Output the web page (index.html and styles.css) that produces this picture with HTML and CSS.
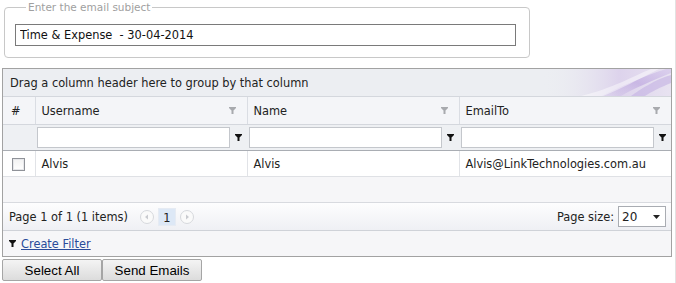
FILE: index.html
```html
<!DOCTYPE html>
<html lang="en">

<head>
    <meta charset="UTF-8">
    <title>Send Emails</title>
    <link rel="stylesheet" href="styles.css">
</head>

<body>
    <fieldset class="subject">
        <legend>Enter the email subject</legend>
        <input class="subject-input" type="text" value="Time &amp; Expense  - 30-04-2014">
    </fieldset>

    <div class="grid">
        <div class="group-panel">
            <span>Drag a column header here to group by that column</span>
            <svg class="swoosh" width="130" height="27" viewBox="0 0 130 27">
                <defs>
                    <linearGradient id="sw1" x1="0" y1="0" x2="1" y2="0">
                        <stop offset="0" stop-color="#eceef2" stop-opacity="0" />
                        <stop offset="0.6" stop-color="#ddd3ec" />
                        <stop offset="1" stop-color="#e8e3f1" />
                    </linearGradient>
                    <linearGradient id="sw2" x1="0" y1="1" x2="1" y2="0">
                        <stop offset="0" stop-color="#c8b6e4" stop-opacity="0.2" />
                        <stop offset="0.5" stop-color="#bfa9e0" />
                        <stop offset="1" stop-color="#d6c9ec" />
                    </linearGradient>
                </defs>
                <rect width="130" height="27" fill="url(#sw1)" />
                <path d="M60 27 C80 18 100 8 125 0 L130 0 L130 4 C110 12 92 20 80 27 Z" fill="url(#sw2)" opacity="0.7" />
                <path d="M90 27 C100 20 115 10 130 6 L130 14 C120 18 110 23 104 27 Z" fill="#c3b0e2" opacity="0.6" />
                <path d="M40 27 C70 20 95 6 110 0 L118 0 C98 10 80 20 62 27 Z" fill="#ffffff" opacity="0.45" />
            </svg>
        </div>

        <table class="table">
            <colgroup>
                <col class="col-num">
                <col class="col-wide">
                <col class="col-wide">
                <col>
            </colgroup>
            <thead>
                <tr class="header-row">
                    <th>#</th>
                    <th><span class="th-inner">Username <svg class="funnel light" width="7" height="8" viewBox="0 0 7 8"><path d="M0 0H7V1L4.5 3.5V7H2.5V3.5L0 1Z" /></svg></span></th>
                    <th><span class="th-inner">Name <svg class="funnel light" width="7" height="8" viewBox="0 0 7 8"><path d="M0 0H7V1L4.5 3.5V7H2.5V3.5L0 1Z" /></svg></span></th>
                    <th><span class="th-inner">EmailTo <svg class="funnel light" width="7" height="8" viewBox="0 0 7 8"><path d="M0 0H7V1L4.5 3.5V7H2.5V3.5L0 1Z" /></svg></span></th>
                </tr>
                <tr class="filter-row">
                    <td></td>
                    <td><div class="filter-cell"><input type="text"><svg class="funnel" width="7" height="8" viewBox="0 0 7 8"><path d="M0 0H7V1L4.5 3.5V7H2.5V3.5L0 1Z" /></svg></div></td>
                    <td><div class="filter-cell"><input type="text"><svg class="funnel" width="7" height="8" viewBox="0 0 7 8"><path d="M0 0H7V1L4.5 3.5V7H2.5V3.5L0 1Z" /></svg></div></td>
                    <td><div class="filter-cell"><input type="text"><svg class="funnel" width="7" height="8" viewBox="0 0 7 8"><path d="M0 0H7V1L4.5 3.5V7H2.5V3.5L0 1Z" /></svg></div></td>
                </tr>
            </thead>
            <tbody>
                <tr class="data-row">
                    <td class="check-cell"><span class="checkbox"></span></td>
                    <td>Alvis</td>
                    <td>Alvis</td>
                    <td>Alvis@LinkTechnologies.com.au</td>
                </tr>
            </tbody>
        </table>

        <div class="empty-area"></div>

        <div class="pager">
            <div class="pager-info">
                <span>Page 1 of 1 (1 items)</span>
                <span class="pager-btn">
                    <svg width="14" height="14" viewBox="0 0 14 14"><circle cx="7" cy="7" r="6.5" fill="#fafafa" stroke="#d6d8dc" /><path d="M8 4.5V9.5L5 7Z" fill="#c9cbd0" /></svg>
                </span>
                <span class="page-num">1</span>
                <span class="pager-btn">
                    <svg width="14" height="14" viewBox="0 0 14 14"><circle cx="7" cy="7" r="6.5" fill="#fafafa" stroke="#d6d8dc" /><path d="M6 4.5V9.5L9 7Z" fill="#c9cbd0" /></svg>
                </span>
            </div>
            <div class="page-size">
                <span>Page size:</span>
                <div class="combo">
                    <span>20</span>
                    <svg width="7" height="4" viewBox="0 0 7 4"><path d="M0 0H7L3.5 4Z" fill="#222" /></svg>
                </div>
            </div>
        </div>

        <div class="command-bar">
            <svg class="funnel" width="7" height="8" viewBox="0 0 7 8"><path d="M0 0H7V1L4.5 3.5V7H2.5V3.5L0 1Z" /></svg>
            <a href="#" class="create-filter">Create Filter</a>
        </div>
    </div>

    <div class="actions">
        <button class="btn">Select All</button>
        <button class="btn">Send Emails</button>
    </div>
</body>

</html>
```

FILE: styles.css
```css
body {
    margin: 0;
    width: 676px;
    height: 283px;
    font-family: "DejaVu Sans", Verdana, sans-serif;
    font-size: 11.4px;
    color: #222;
    background: #fff;
    overflow: hidden;
    border-right: 1px solid #e2e2e2;
    box-sizing: border-box;
}
.subject {
    margin: 0 0 0 4px;
    width: 526px;
    height: 58px;
    box-sizing: border-box;
    padding: 10px 0 0 10px;
    border: 1px solid #c8c8c8;
    border-radius: 4px;
}
.subject legend {
    margin-left: 11px;
    padding: 0 2px;
    color: #a0a0a0;
    font-size: 10.5px;
    line-height: 14px;
}
.subject-input {
    width: 501px;
    height: 22px;
    box-sizing: border-box;
    margin: 0;
    padding: 0 4px;
    border: 1px solid #7a7a7a;
    font-family: "DejaVu Sans", Verdana, sans-serif;
    font-size: 11.4px;
    color: #111;
    outline: none;
}
.grid {
    margin: 10px 3px 0 2px;
    border: 1px solid #a2a2a2;
    background: #fff;
}
.group-panel {
    position: relative;
    height: 27px;
    display: flex;
    align-items: center;
    padding-left: 7px;
    background: #eceef2;
    border-bottom: 1px solid #d4d7dd;
    overflow: hidden;
}
.group-panel span {
    position: relative;
    z-index: 1;
}
.swoosh {
    position: absolute;
    right: 0;
    top: 0;
}
.table {
    width: 100%;
    border-collapse: collapse;
    table-layout: fixed;
}
.col-num {
    width: 32px;
}
.col-wide {
    width: 212px;
}
.header-row th {
    height: 27px;
    padding: 0 11px 0 6px;
    font-weight: normal;
    text-align: left;
    background: #f4f5f8;
    border-left: 1px solid #dadde3;
    border-bottom: 1px solid #d4d7dd;
}
.header-row th:first-child {
    border-left: none;
    padding-left: 8px;
}
.th-inner {
    display: flex;
    justify-content: space-between;
    align-items: center;
}
.funnel {
    fill: #111;
    flex: none;
}
.funnel.light {
    fill: #a8aaae;
}
.filter-row td {
    height: 25px;
    padding: 0;
    background: #eef0f3;
    border-bottom: 1px solid #a9adb3;
}
.filter-cell {
    display: flex;
    align-items: center;
    padding: 0 5px 0 2px;
    gap: 5px;
}
.filter-cell input {
    flex: 1;
    min-width: 0;
    height: 21px;
    box-sizing: border-box;
    margin: 0;
    border: 1px solid #c4c7cc;
    background: #fff;
    outline: none;
}
.data-row td {
    height: 25px;
    padding: 0 6px;
    border-left: 1px solid #e1e3e7;
    border-bottom: 1px solid #dfe1e5;
    background: #fff;
}
.data-row td:first-child {
    border-left: none;
}
.check-cell {
    text-align: center;
}
.checkbox {
    display: inline-block;
    width: 11px;
    height: 11px;
    border: 1px solid #8f9298;
    background: linear-gradient(#f2f2f2, #ffffff);
    box-shadow: inset 0 0 0 1px #e6e7ea;
    vertical-align: middle;
}
.empty-area {
    height: 25px;
    background: #f6f6f8;
    border-bottom: 1px solid #d8dadf;
}
.pager {
    height: 27px;
    display: flex;
    align-items: center;
    justify-content: space-between;
    padding: 0 5px 0 6px;
    background: linear-gradient(#fdfdfe, #eff0f4);
    border-bottom: 1px solid #cfd2d8;
}
.pager-info {
    display: flex;
    align-items: center;
    gap: 4px;
}
.pager-info > span:first-child {
    margin-right: 8px;
}
.pager-btn {
    display: flex;
}
.page-num {
    display: inline-block;
    width: 18px;
    height: 18px;
    line-height: 18px;
    text-align: center;
    background: #dde8f6;
    border: 1px solid #e6ebf3;
    box-sizing: border-box;
}
.page-size {
    display: flex;
    align-items: center;
    gap: 4px;
}
.combo {
    width: 48px;
    height: 21px;
    box-sizing: border-box;
    display: flex;
    align-items: center;
    justify-content: space-between;
    padding: 0 5px 0 3px;
    border: 1px solid #a9acb2;
    background: #fff;
    font-size: 12px;
}
.command-bar {
    height: 25px;
    display: flex;
    align-items: center;
    gap: 5px;
    padding-left: 6px;
    background: #f6f6f8;
}
.create-filter {
    color: #2a4b9a;
}
.actions {
    display: flex;
    padding: 2px 0 0 2px;
}
.btn {
    width: 100px;
    height: 22px;
    margin: 0;
    padding: 0;
    font-family: "Liberation Sans", Arial, sans-serif;
    font-size: 13.33px;
    color: #000;
    border: 1px solid #a5a5a5;
    border-radius: 2px;
    background: linear-gradient(#f4f4f4, #dcdcdc);
}
```
